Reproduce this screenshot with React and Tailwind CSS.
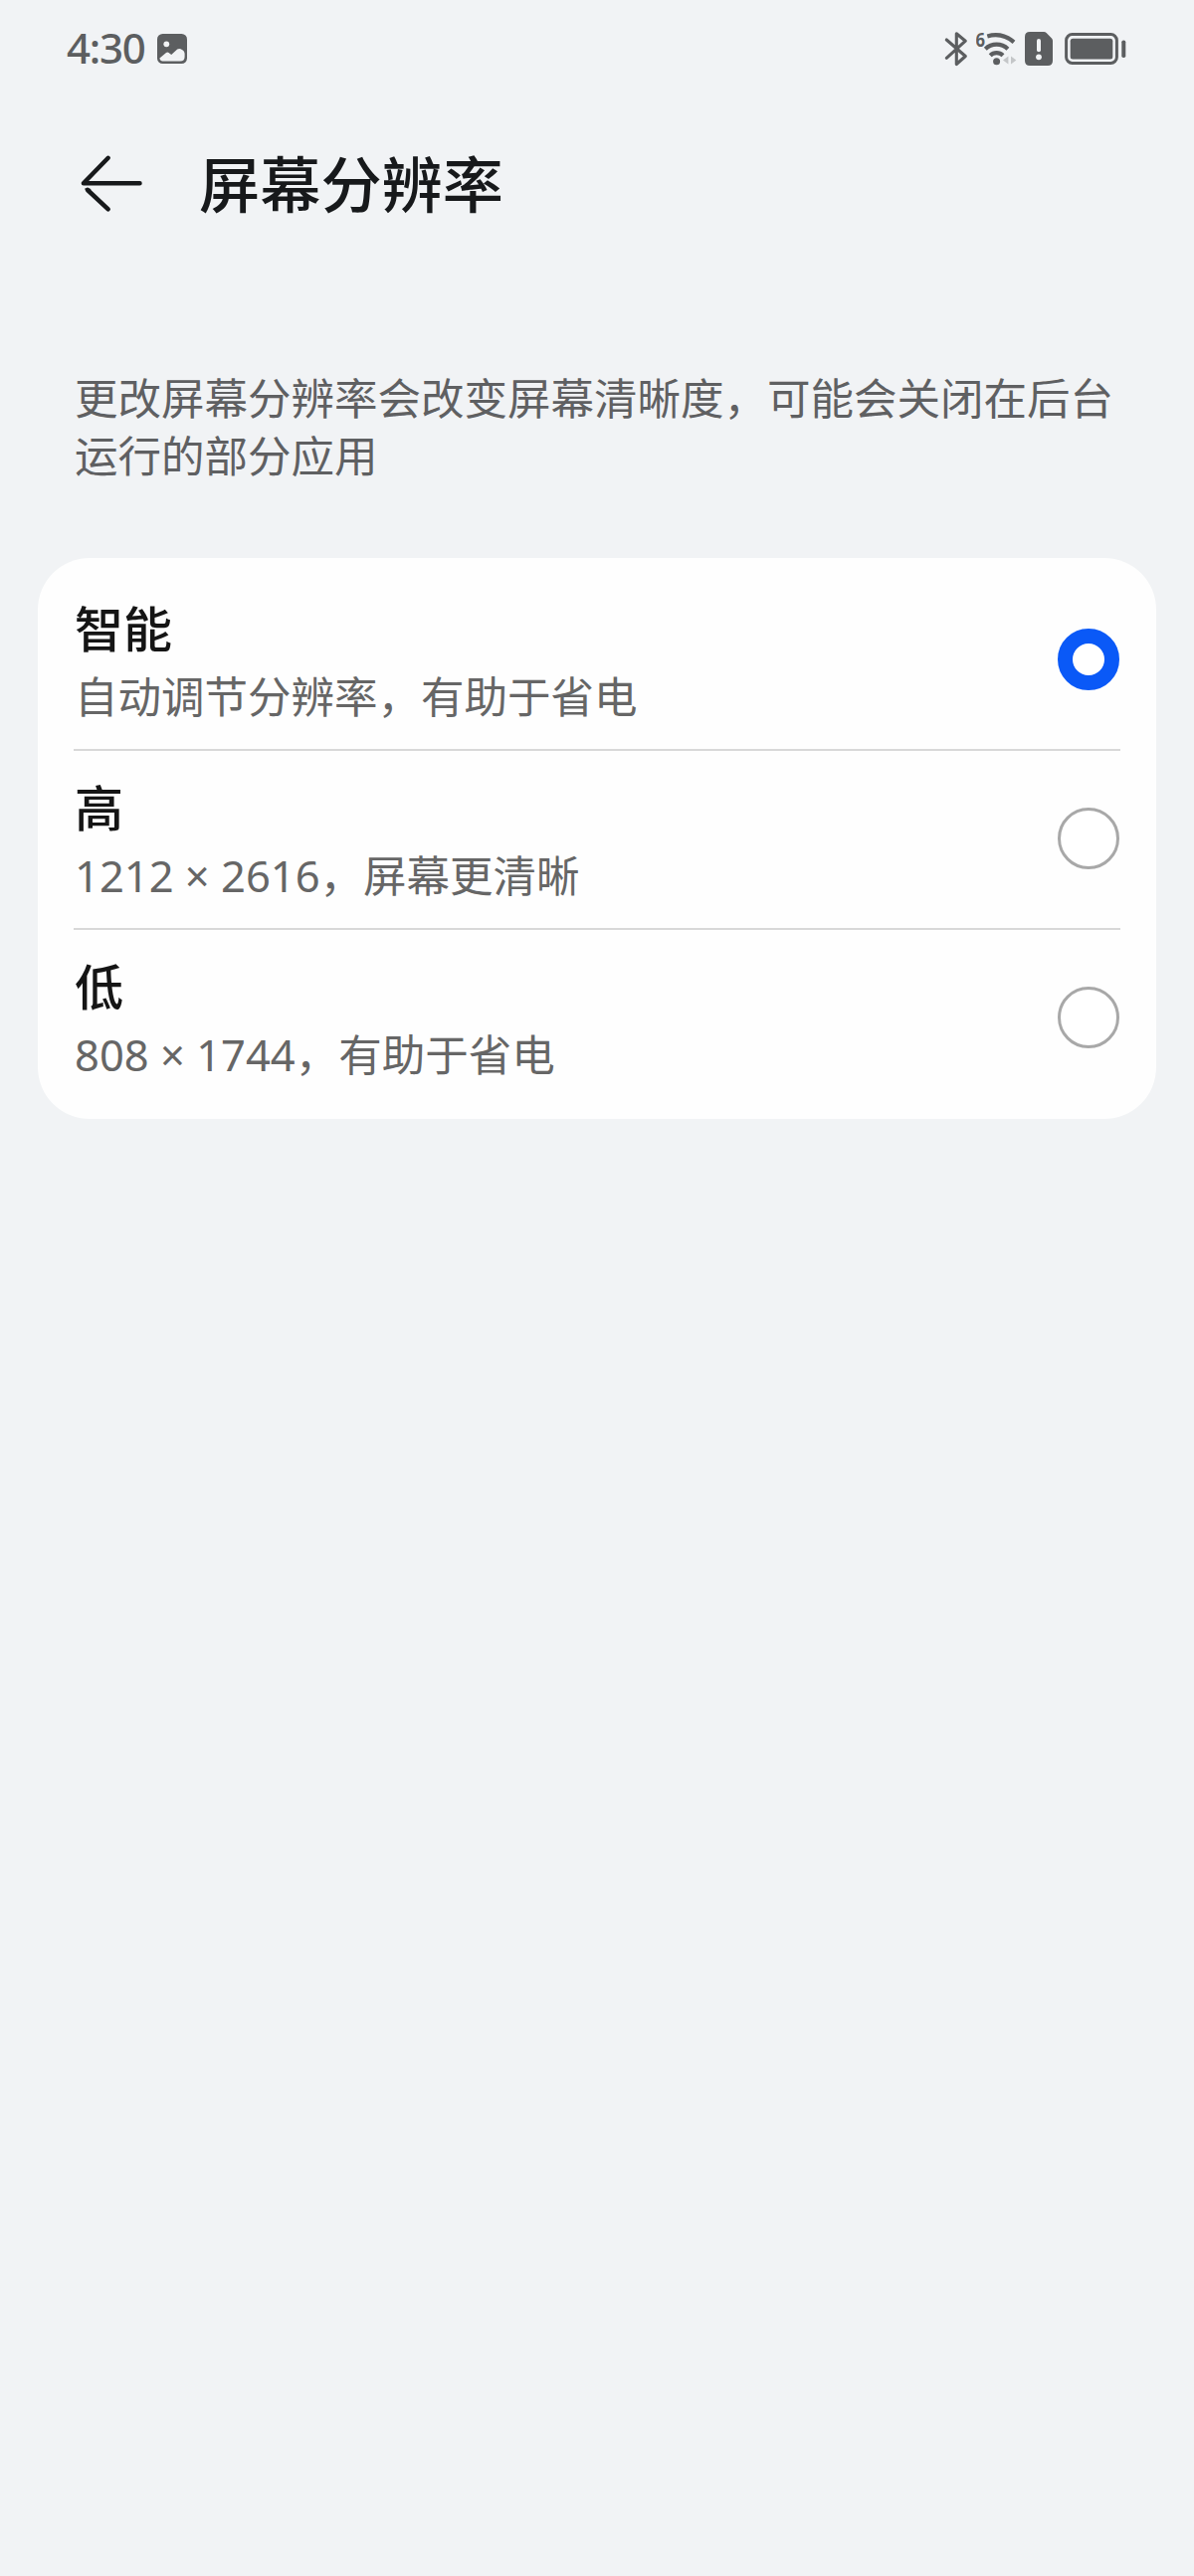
import { useState } from 'react';

const options = [
  { id: 'smart', title: '智能', desc: '自动调节分辨率，有助于省电' },
  { id: 'high', title: '高', size: '1212 × 2616', desc: '，屏幕更清晰' },
  { id: 'low', title: '低', size: '808 × 1744', desc: '，有助于省电' },
];

const PictureIcon = () => (
  <svg className="h-[30px] w-[30px]" viewBox="0 0 30 30">
    <rect width="30" height="30" rx="5.5" fill="#5c5e60" />
    <circle cx="9.3" cy="10.3" r="2.9" fill="#f1f3f5" />
    <path
      d="M2.4 24.4 L9 18.9 Q10.3 17.9 11.6 19 L14.2 21 L20.2 15.6 Q21.7 14.4 23.6 15.2 Q27.6 17 27.6 20 V23 Q27.6 27.6 23 27.6 H7 Q3 27.6 2.4 24.4 Z"
      fill="#f1f3f5"
    />
  </svg>
);

const BluetoothIcon = () => (
  <svg className="h-[36px] w-[24px]" viewBox="0 0 24 36" fill="none" stroke="#5c5e60" strokeWidth="3.1" strokeLinecap="round" strokeLinejoin="round">
    <path d="M2.3 9 L21.3 25.5 L12.3 33.5 V2.8 L21.3 10.2 L2.3 27.3" />
  </svg>
);

const WifiIcon = () => (
  <svg className="h-[56px] w-[42px]" viewBox="0 -10 42 56">
    <text x="-0.5" y="16" className="font-['Noto_Sans',sans-serif]" fontSize="19.5" fontWeight="700" textLength="9.5" lengthAdjust="spacingAndGlyphs" fill="#5c5e60">6</text>
    <g fill="none" stroke="#5c5e60" strokeWidth="4.2" strokeLinecap="butt">
      <path d="M11.3 5.4 A 29 29 0 0 1 38 11.3" />
      <path d="M9.3 18.2 A 16.5 16.5 0 0 1 31.9 18.2" />
      <path d="M14.2 24.8 A 9.2 9.2 0 0 1 27 24.8" />
    </g>
    <circle cx="20.6" cy="30.8" r="3.5" fill="#5c5e60" />
    <path d="M32.4 25.5 V33.5 L27 29.5 Z M35 25.5 V33.5 L40.4 29.5 Z" fill="#c4c6c8" />
  </svg>
);

const SimAlertIcon = () => (
  <svg className="h-[34px] w-[28px]" viewBox="0 0 28 34">
    <path d="M5 0 H19.2 Q20.6 0 21.6 1 L27 6.4 Q28 7.4 28 9 V29 Q28 34 23 34 H5 Q0 34 0 29 V5 Q0 0 5 0 Z" fill="#5c5e60" />
    <path d="M14 9 V18.3" stroke="#f1f3f5" strokeWidth="4" strokeLinecap="round" />
    <circle cx="14" cy="25.3" r="2.9" fill="#f1f3f5" />
  </svg>
);

const BatteryIcon = () => (
  <svg className="h-[32px] w-[62px]" viewBox="0 0 62 32">
    <rect x="1.6" y="1.6" width="50.8" height="28.8" rx="6" fill="none" stroke="#5c5e60" strokeWidth="3" />
    <rect x="5.7" y="5.7" width="42.6" height="20.8" rx="2.5" fill="#5c5e60" />
    <rect x="57.3" y="7.5" width="4" height="17.5" rx="1.8" fill="#5c5e60" />
  </svg>
);

const BackIcon = () => (
  <svg className="h-[60px] w-[66px]" viewBox="0 0 66 60" fill="none" stroke="#17191b" strokeWidth="4.5" strokeLinecap="round" strokeLinejoin="round">
    <path d="M60.5 30.3 H3.9 L28.7 4.8" />
    <path d="M8 37 L28.7 56.3" />
    <path d="M6 36 L10.5 36.6" strokeWidth="1.6" />
  </svg>
);

const Radio = ({ checked }) => (
  <span
    className={`mr-px block h-[62px] w-[62px] rounded-full bg-white ${
      checked ? 'border-[15px] border-[#0a59f7]' : 'border-[3px] border-[#a8a8a8]'
    }`}
  />
);

const App = () => {
  const [selected, setSelected] = useState('smart');

  return (
    <div className="h-[2590px] w-[1200px] bg-[#f1f3f5] font-['Noto_Sans_CJK_SC',sans-serif]">
      {/* Status bar */}
      <div className="flex h-[98px] items-center justify-between pr-[68px] pl-[67px]">
        <div className="flex items-center">
          <span className="w-[91px] pb-[2px] font-['Noto_Sans',sans-serif] text-[42px] leading-[60px] font-medium tracking-[-1.2px] text-[#5c5e60]">
            4:30
          </span>
          <PictureIcon />
        </div>
        <div className="flex items-center">
          <BluetoothIcon />
          <div className="ml-[8px]"><WifiIcon /></div>
          <div className="ml-[7px]"><SimAlertIcon /></div>
          <div className="ml-[12px]"><BatteryIcon /></div>
        </div>
      </div>

      {/* Title */}
      <header className="flex h-[174px] items-center pb-[2px] pl-[80px]">
        <button type="button" aria-label="返回">
          <BackIcon />
        </button>
        <h1 className="ml-[54px] pb-[2px] text-[61.2px] leading-[90px] font-medium text-[#17191b]">屏幕分辨率</h1>
      </header>

      <p className="mt-[98px] w-[1126px] pl-[75px] text-[43.5px] leading-[57.6px] text-[#5f6062]">
        更改屏幕分辨率会改变屏幕清晰度，可能会关闭在后台运行的部分应用
      </p>

      {/* Resolution options */}
      <div className="mx-[38px] mt-[76px] rounded-[52px] bg-[#fefefe] px-[36px] pt-[14px] pb-[10px]">
        {options.map((option, index) => (
          <div
            key={option.id}
            onClick={() => setSelected(option.id)}
            className={`flex h-[180px] items-center justify-between border-b-2 pb-[2px] ${
              index < options.length - 1 ? 'border-[#d8d8d8]' : 'border-transparent'
            }`}
          >
            <div className="pl-px">
              <h2 className="text-[49px] leading-[70px] font-medium text-[#151515]">{option.title}</h2>
              <p className="pt-px text-[43.5px] leading-[65px] text-[#666666]">
                {option.size && <span className="font-['Noto_Sans',sans-serif] leading-none">{option.size}</span>}
                {option.desc}
              </p>
            </div>
            <Radio checked={selected === option.id} />
          </div>
        ))}
      </div>
    </div>
  );
};

export default App;
